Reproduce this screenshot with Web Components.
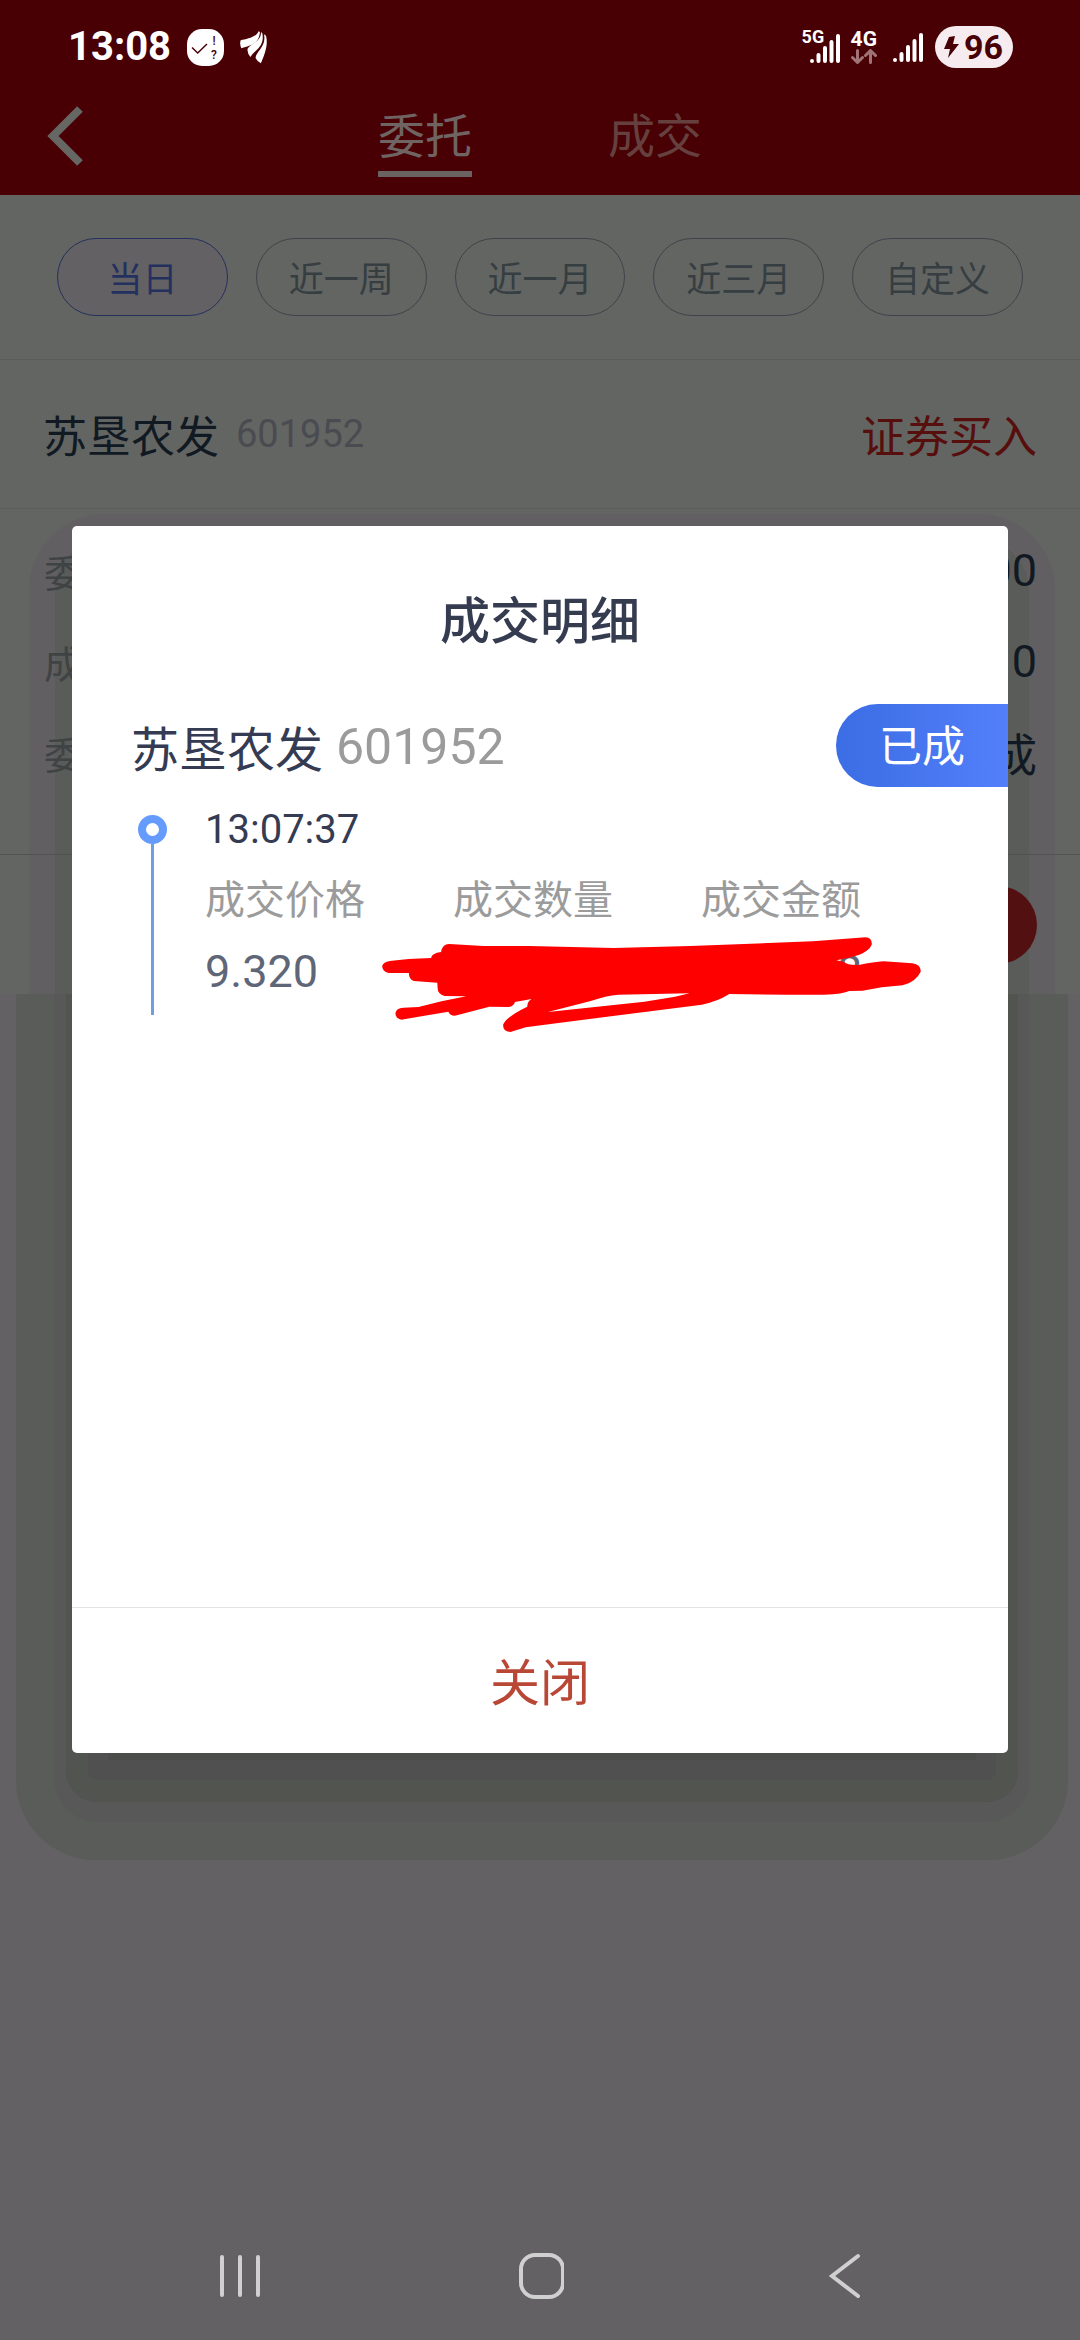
<!DOCTYPE html>
<html lang="zh-CN">
<head>
<meta charset="UTF-8">
<meta name="viewport" content="width=device-width, initial-scale=1">
<title>成交明细</title>
<style>
    body {
        margin: 0;
        background: #636163;
        font-family: Roboto, "Noto Sans CJK SC", sans-serif;
    }
</style>
</head>
<body>
<trade-app>
    <status-bar slot="top" time="13:08" battery="96"></status-bar>
    <title-bar slot="top">
        <tab-item active>委托</tab-item>
        <tab-item>成交</tab-item>
    </title-bar>

    <filter-bar>
        <filter-pill active>当日</filter-pill>
        <filter-pill>近一周</filter-pill>
        <filter-pill>近一月</filter-pill>
        <filter-pill>近三月</filter-pill>
        <filter-pill>自定义</filter-pill>
    </filter-bar>
    <order-card name="苏垦农发" code="601952" side="证券买入">
        <order-row label="委">00</order-row>
        <order-row label="成">0</order-row>
        <order-row label="委">成</order-row>
    </order-card>

    <detail-dialog slot="dialog" heading="成交明细" name="苏垦农发" code="601952" status="已成">
        <deal-item time="13:07:37" price="9.320" amount="8"></deal-item>
    </detail-dialog>

    <nav-bar slot="bottom"></nav-bar>
</trade-app>

<script>
class BaseElement extends HTMLElement {
    constructor() {
        super();
        this.attachShadow({mode: "open"});
        this.shadowRoot.innerHTML = this.getTemplate();
    }

    attr(name) {
        return this.getAttribute(name) || "";
    }
}

class TradeApp extends BaseElement {
    getTemplate() {
        return `
    <style>
        :host {
            position: relative;
            display: flex;
            flex-direction: column;
            min-height: 100vh;
        }
        header {
            background: #480005;
        }
        main {
            background: #636562;
        }
        .floor {
            position: relative;
            flex: 1;
            overflow: hidden;
        }
        /* lower part of the dialog shadow, in steps */
        .shade {
            position: absolute;
            top: -100px;
            left: 66px;
            right: 62px;
            height: 908px;
            border-radius: 32px;
            background: #4b4d4a;
            box-shadow:
                inset 0 0 0 22px #525450,
                inset 0 0 0 42px #505050,
                0 8px 0 12px #595859,
                0 8px 0 50px #5a5c59;
        }
        .overlay {
            position: absolute;
            inset: 0;
            padding: 526px 72px 0;
        }
        footer {
            position: relative;
        }
    </style>
    <header><slot name="top"></slot></header>
    <main><slot></slot></main>
    <div class="floor"><div class="shade"></div></div>
    <div class="overlay"><slot name="dialog"></slot></div>
    <footer><slot name="bottom"></slot></footer>
    `;
    }
}

class StatusBar extends BaseElement {
    getBars() {
        return `
            <svg class="bars" width="30" height="29" viewBox="0 0 30 29" stroke="#fff" stroke-width="4" stroke-linecap="round">
                <path d="M2 27V27M8.500 21V27M15 14V27M21.500 8V27M28 2V27"/>
            </svg>`;
    }

    getTemplate() {
        return `
    <style>
        :host {
            display: flex;
            align-items: center;
            justify-content: space-between;
            height: 88px;
            padding: 6px 67px 0 68px;
            box-sizing: border-box;
            color: #fff;
            font-weight: 700;
        }
        div {
            display: flex;
            align-items: center;
        }
        .time {
            font-size: 40px;
            line-height: 40px;
            margin-right: 16px;
        }
        .app {
            margin-right: 15px;
        }
        .net {
            position: relative;
            width: 38px;
            height: 32px;
            align-items: flex-end;
            justify-content: flex-end;
        }
        .net span {
            position: absolute;
            top: -3px;
            left: 0;
            font-size: 18px;
            line-height: 18px;
        }
        .data {
            flex-direction: column;
            margin: 0 16px 0 11px;
            font-size: 21px;
            line-height: 18px;
            gap: 1px;
        }
        .battery {
            height: 42px;
            margin-left: 12px;
            padding: 0 10px 0 9px;
            gap: 5px;
            border-radius: 21px;
            background: #f6ecf0;
            color: #480005;
            font-size: 34px;
            line-height: 42px;
        }
    </style>
    <div>
        <span class="time">${this.attr("time")}</span>
        <svg class="app" width="37" height="37" viewBox="0 0 37 37">
            <rect width="37" height="37" rx="15" fill="#fff"/>
            <path d="M5 18.500L10.700 24L20 15" fill="none" stroke="#480005" stroke-width="1.500"/>
            <text x="27" y="16" text-anchor="middle" font-size="12" font-weight="500" fill="#480005">!</text>
            <text x="27" y="30" text-anchor="middle" font-size="12" font-weight="500" fill="#480005">?</text>
        </svg>
        <svg width="29" height="34" viewBox="690 90 86 102" preserveAspectRatio="none" fill="#fff">
            <path d="M748 94C742 112 712 117 695 121Q691 132 697 145C714 138 749 138 752 96Z"/>
            <path d="M755 97C757 128 716 132 715 150Q716 163 724 171C733 152 768 142 759 99Z"/>
            <path d="M764 103C772 140 742 152 739 174Q746 187 755 190C764 168 778 136 770 107Z"/>
        </svg>
    </div>
    <div>
        <div class="net"><span>5G</span>${this.getBars()}</div>
        <div class="data">
            <span>4G</span>
            <svg width="26" height="15" viewBox="0 0 26 15" fill="none" stroke="#a07477" stroke-width="3" stroke-linecap="round" stroke-linejoin="round">
                <path d="M6.500 1.500V13M1.500 8.500L6.500 13.500L11.500 8.500M19.500 13.500V2M14.500 6.500L19.500 1.500L24.500 6.500"/>
            </svg>
        </div>
        ${this.getBars()}
        <div class="battery">
            <svg width="15" height="22" viewBox="0 0 15 22" fill="#480005">
                <path d="M5 1L11 0L9 8L15 8L4 22L6 13L0 13Z"/>
            </svg>
            <span>${this.attr("battery")}</span>
        </div>
    </div>
    `;
    }
}

class TitleBar extends BaseElement {
    getTemplate() {
        return `
    <style>
        :host {
            display: grid;
            grid-template-columns: 1fr auto 1fr;
            align-items: start;
            height: 107px;
        }
        button {
            justify-self: start;
            margin: 0;
            padding: 17px 46px 0;
            border: 0;
            background: none;
        }
        svg {
            display: block;
        }
        nav {
            display: flex;
            gap: 136px;
        }
    </style>
    <button aria-label="返回">
        <svg width="40" height="62" viewBox="0 0 40 62" fill="none" stroke="#666663" stroke-width="8">
            <path d="M34 4L7 31L34 58"/>
        </svg>
    </button>
    <nav><slot></slot></nav>
    `;
    }
}

class TabItem extends BaseElement {
    getTemplate() {
        return `
    <style>
        :host {
            display: block;
        }
        button {
            display: block;
            margin: 0;
            padding: 19px 0 4px;
            border: 0;
            border-bottom: 6px solid transparent;
            background: none;
            color: #66403e;
            font: inherit;
            font-size: 47px;
            line-height: 60px;
        }
        :host([active]) button {
            color: #6f6462;
            border-color: #6b6361;
        }
    </style>
    <button><slot></slot></button>
    `;
    }
}

class FilterBar extends BaseElement {
    getTemplate() {
        return `
    <style>
        :host {
            display: flex;
            gap: 28px;
            padding: 43px 57px;
            border-bottom: 1px solid #5a5c59;
        }
    </style>
    <slot></slot>
    `;
    }
}

class FilterPill extends BaseElement {
    getTemplate() {
        return `
    <style>
        :host {
            display: block;
            flex: 1;
        }
        button {
            display: block;
            width: 100%;
            height: 78px;
            margin: 0;
            padding: 0 0 2px;
            border: 1px solid #3f424b;
            border-radius: 39px;
            background: none;
            color: #363e42;
            font: inherit;
            font-size: 35px;
        }
        :host([active]) button {
            border-color: #24315f;
            background: #636163;
            color: #24315f;
        }
    </style>
    <button><slot></slot></button>
    `;
    }
}

class OrderCard extends BaseElement {
    getTemplate() {
        return `
    <style>
        :host {
            display: block;
        }
        .head {
            display: flex;
            align-items: center;
            height: 148px;
            padding: 0 43px;
            border-bottom: 1px solid #5a5c59;
            font-size: 44px;
            color: #111922;
        }
        .code {
            margin-left: 17px;
            font-size: 38px;
            color: #4a4b50;
        }
        .side {
            margin-left: auto;
            color: #560f0d;
        }
        .body {
            position: relative;
            overflow: hidden;
            isolation: isolate;
        }
        /* upper part of the dialog shadow */
        .shade {
            position: absolute;
            z-index: -1;
            top: 31px;
            bottom: -100px;
            left: 55px;
            right: 51px;
            border-radius: 50px;
            background: #5a5c59;
            box-shadow: 0 0 0 26px #625f62;
        }
        .rows {
            padding: 16px 43px 56px 44px;
            border-bottom: 1px solid #525351;
        }
        .actions {
            display: flex;
            justify-content: flex-end;
            padding: 31px 43px 30px;
        }
        .actions button {
            width: 170px;
            height: 78px;
            border: 0;
            border-radius: 39px;
            background: #521010;
        }
    </style>
    <div class="head">
        <span>${this.attr("name")}</span>
        <span class="code">${this.attr("code")}</span>
        <span class="side">${this.attr("side")}</span>
    </div>
    <div class="body">
        <div class="shade"></div>
        <div class="rows"><slot></slot></div>
        <div class="actions"><button aria-label="撤单"></button></div>
    </div>
    `;
    }
}

class OrderRow extends BaseElement {
    getTemplate() {
        return `
    <style>
        :host {
            display: flex;
            align-items: center;
            justify-content: space-between;
            height: 91px;
            color: #111922;
            font-size: 45px;
        }
        .label {
            color: #404344;
            font-size: 38px;
        }
    </style>
    <span class="label">${this.attr("label")}</span>
    <span><slot></slot></span>
    `;
    }
}

class DetailDialog extends BaseElement {
    getTemplate() {
        return `
    <style>
        :host {
            display: block;
            overflow: hidden;
            border-radius: 5px;
            background: #fff;
        }
        h2 {
            margin: 0;
            padding: 60px 0 46px;
            text-align: center;
            font-size: 50px;
            font-weight: 500;
            line-height: 72px;
            color: #363c50;
        }
        .stock {
            display: flex;
            align-items: center;
            height: 83px;
            padding-left: 59px;
            gap: 13px;
            font-size: 48px;
            color: #343b52;
        }
        .code {
            padding-top: 2px;
            font-size: 50px;
            color: #9b9b9b;
        }
        .status {
            margin-left: auto;
            padding: 4px 43px 0;
            border-radius: 42px 0 0 42px;
            background: linear-gradient(90deg, #3b6de4, #537ffb);
            color: #fff;
            font-size: 43px;
            line-height: 79px;
        }
        .list {
            min-height: 820px;
        }
        .close {
            display: block;
            width: 100%;
            height: 146px;
            margin: 0;
            padding: 0 0 3px;
            border: 0;
            border-top: 1px solid #e3e3e3;
            background: none;
            color: #b94736;
            font: inherit;
            font-size: 50px;
        }
    </style>
    <section role="dialog" aria-label="${this.attr("heading")}">
        <h2>${this.attr("heading")}</h2>
        <div class="stock">
            <span>${this.attr("name")}</span>
            <span class="code">${this.attr("code")}</span>
            <span class="status">${this.attr("status")}</span>
        </div>
        <div class="list"><slot></slot></div>
        <button class="close">关闭</button>
    </section>
    `;
    }
}

class DealItem extends BaseElement {
    getTemplate() {
        return `
    <style>
        :host {
            display: flex;
            gap: 38px;
            padding: 15px 59px 0 66px;
        }
        .rail {
            display: flex;
            flex-direction: column;
            align-items: center;
            width: 29px;
            padding-top: 13px;
        }
        .dot {
            width: 13px;
            height: 13px;
            border: 8px solid #659bfd;
            border-radius: 50%;
        }
        .line {
            width: 3px;
            height: 171px;
            background: #709fe0;
        }
        .info {
            position: relative;
            flex: 1;
        }
        .time {
            font-size: 40px;
            line-height: 56px;
            color: #343b52;
        }
        table {
            width: 100%;
            table-layout: fixed;
            border-spacing: 0;
        }
        th, td {
            padding: 15px 0 0;
            text-align: left;
            font-size: 40px;
            font-weight: 400;
            line-height: 56px;
            color: #9b9b9b;
        }
        td {
            font-size: 45px;
            color: #5f6677;
        }
        .amount {
            padding-left: 136px;
        }
        .mark {
            position: absolute;
            top: 134px;
            left: 176px;
        }
    </style>
    <div class="rail"><div class="dot"></div><div class="line"></div></div>
    <div class="info">
        <div class="time">${this.attr("time")}</div>
        <table>
            <thead><tr><th>成交价格</th><th>成交数量</th><th>成交金额</th></tr></thead>
            <tbody><tr><td>${this.attr("price")}</td><td></td><td class="amount">${this.attr("amount")}</td></tr></tbody>
        </table>
        <svg class="mark" width="542" height="98" viewBox="52 228 1416 294" preserveAspectRatio="none">
            <path fill="#f00" fill-rule="evenodd" d="M75 303Q120 296 183 294Q184 280 209 276Q212 252 230 252L320 258L440 258L660 264L860 258L1180 244L1318 232Q1336 234 1334 254Q1328 272 1300 285Q1270 296 1242 301L1262 306Q1270 316 1300 315Q1340 306 1365 304L1440 310Q1463 314 1462 335Q1450 365 1415 376L1360 382L1310 392L1275 393Q1260 402 1210 404L1110 404L962 402Q930 425 890 434L480 494L430 502L390 516Q370 514 371 494Q380 470 434 440Q434 425 445 417L402 426Q398 440 385 441L335 440L245 467Q232 467 228 455L105 479Q88 474 90 458Q92 444 110 443L150 441L210 424L275 409L218 408Q200 402 200 385L199 368L138 363Q124 358 125 339L72 339Q55 334 55 318Q58 306 75 303ZM488 456L600 423Q640 407 672 404L858 400L820 410L740 425Z"/>
        </svg>
    </div>
    `;
    }
}

class NavBar extends BaseElement {
    getTemplate() {
        return `
    <style>
        :host {
            display: flex;
            justify-content: space-between;
            padding: 0 216px 40px 218px;
        }
        button {
            margin: 0;
            padding: 0;
            border: 0;
            background: none;
        }
        svg {
            display: block;
            fill: none;
            stroke: #d0d0d0;
            stroke-width: 4;
            stroke-linecap: round;
        }
    </style>
    <button aria-label="最近任务">
        <svg width="46" height="48" viewBox="0 0 46 48"><path d="M4 5V43M22 5V43M40 5V43"/></svg>
    </button>
    <button aria-label="主屏幕">
        <svg width="46" height="48" viewBox="0 0 46 48"><rect x="3" y="3" width="42" height="42" rx="14"/></svg>
    </button>
    <button aria-label="返回">
        <svg width="46" height="48" viewBox="0 0 46 48"><path d="M40 4L14 24L40 44"/></svg>
    </button>
    `;
    }
}

customElements.define("trade-app", TradeApp);
customElements.define("status-bar", StatusBar);
customElements.define("title-bar", TitleBar);
customElements.define("tab-item", TabItem);
customElements.define("filter-bar", FilterBar);
customElements.define("filter-pill", FilterPill);
customElements.define("order-card", OrderCard);
customElements.define("order-row", OrderRow);
customElements.define("detail-dialog", DetailDialog);
customElements.define("deal-item", DealItem);
customElements.define("nav-bar", NavBar);
</script>
</body>
</html>
